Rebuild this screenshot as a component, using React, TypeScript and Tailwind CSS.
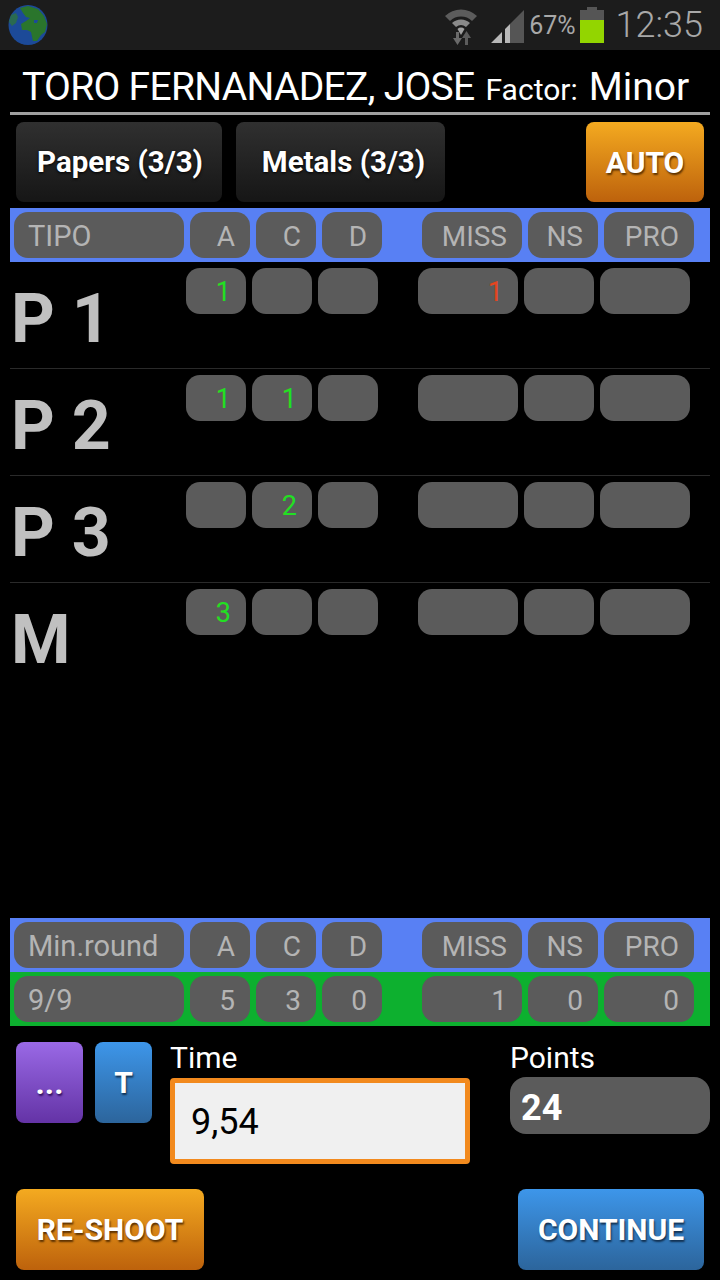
import React from "react";

const font = "font-['Roboto',sans-serif]";

function Pill({ w, children, align = "right", color = "text-[#b4b4b4]", size = "text-[27px]" }: { w: string; children?: React.ReactNode; align?: string; color?: string; size?: string }) {
  return (
    <div className={`${w} h-[46px] rounded-[14px] bg-[#5b5b5b] flex items-center pt-[3px] ${size} leading-none ${color} ${align === "left" ? "justify-start pl-[14px]" : "justify-end pr-[15px]"}`}>
      {children}
    </div>
  );
}

function SummaryStrip({ bg, values }: { bg: string; values: string[] }) {
  return (
    <div className={`mx-[10px] h-[54px] ${bg} flex items-center pl-[4px]`}>
      <Pill w="w-[170px] mr-[6px]" align="left" size="text-[29px]">{values[0]}</Pill>
      <div className="flex gap-[6px]">
        <Pill w="w-[60px]" size="text-[28px]">{values[1]}</Pill>
        <Pill w="w-[60px]" size="text-[28px]">{values[2]}</Pill>
        <Pill w="w-[60px]" size="text-[28px]">{values[3]}</Pill>
      </div>
      <div className="flex gap-[6px] ml-[40px]">
        <Pill w="w-[100px]" size="text-[28px]">{values[4]}</Pill>
        <Pill w="w-[70px]" size="text-[28px]">{values[5]}</Pill>
        <Pill w="w-[90px]" size="text-[28px]">{values[6]}</Pill>
      </div>
    </div>
  );
}

function TargetRow({ label, a, c, miss, last }: { label: string; a?: string; c?: string; miss?: string; last?: boolean }) {
  return (
    <div className={`h-[107px] mx-[10px] flex items-start ${last ? "" : "border-b border-[#2a2a2a]"}`}>
      <div className="w-[176px] mt-[17px] pl-[1px] text-[68px] leading-[80px] font-bold text-[#c0c0c0]">{label}</div>
      <div className="flex gap-[6px] mt-[6px]">
        <Pill w="w-[60px]" color="text-[#22e022]">{a}</Pill>
        <Pill w="w-[60px]" color="text-[#22e022]">{c}</Pill>
        <Pill w="w-[60px]" />
      </div>
      <div className="flex gap-[6px] ml-[40px] mt-[6px]">
        <Pill w="w-[100px]" color="text-[#e5451f]">{miss}</Pill>
        <Pill w="w-[70px]" />
        <Pill w="w-[90px]" />
      </div>
    </div>
  );
}

function Globe() {
  return (
    <svg viewBox="0 0 40 40" className="w-[40px] h-[40px] ml-[8px]">
      <ellipse cx="20" cy="20" rx="19.500" ry="20" fill="#1c4a98" />
      <path d="M12 3 L20 1 L30 4 L36 11 L39 19 L37 27 L33 30 L29 36 L25 36 L23 27 L19 25 L14 25 L13 19 L18 16 L22 13 L18 12 L15 8Z" fill="#2a752c" />
      <path d="M3 10 L8 8 L10 12 L8 18 L4 21 L1 17Z" fill="#2a6a50" />
      <path d="M26 15 L30 15 L29 18 L26 18Z" fill="#1c4a98" />
    </svg>
  );
}

function StatusIcons() {
  return (
    <div className="flex items-center">
      <svg viewBox="0 0 34 40" className="w-[34px] h-[40px]">
        <path d="M1 11 A23 23 0 0 1 33 11 L28 16 A16 16 0 0 0 6 16Z" fill="#5c5c5c" />
        <path d="M8 18 A13 13 0 0 1 26 18 L22 22 A8 8 0 0 0 12 22Z" fill="#8a8a8a" />
        <path d="M17 30 L13.500 24 A5 5 0 0 1 20.500 24Z" fill="#a0a0a0" />
        <path d="M12 27 h3 v6 h3 l-4.500 7 l-4.500 -7 h3Z" fill="#6a6a6a" />
        <path d="M21 40 h3 v-7 h3 l-4.500 -7 l-4.500 7 h3Z" fill="#5c5c5c" />
      </svg>
      <svg viewBox="0 0 33 33" className="w-[33px] h-[33px] ml-[13px] mt-[3px]">
        <path d="M33 0 V33 H19 V14Z" fill="#555" />
        <path d="M0 33 L11 22 V33Z M14 19 L19 14 V33 H14Z" fill="#b8b8b8" />
      </svg>
    </div>
  );
}

export default function App() {
  const darkBtn = "h-[80px] rounded-[8px] bg-linear-to-b from-[#303030] to-[#161616] flex items-center justify-center text-white font-bold text-[29.5px] [text-shadow:0_1px_3px_#000]";
  const orangeBtn = "rounded-[8px] bg-linear-to-b from-[#f4aa20] to-[#bd620c] flex items-center justify-center text-white font-bold text-[30px] [text-shadow:1px_2px_2px_#5a3000]";
  const blueBtn = "rounded-[8px] bg-linear-to-b from-[#3d96ea] to-[#2c659c] flex items-center justify-center text-white font-bold text-[30px] [text-shadow:1px_2px_2px_#123050]";

  return (
    <div className={`w-[720px] h-[1280px] bg-black overflow-hidden flex flex-col ${font}`}>
      {/* Status bar */}
      <div className="h-[50px] bg-[#1c1c1c] flex items-center justify-between shrink-0">
        <Globe />
        <div className="flex items-center pr-[17px]">
          <StatusIcons />
          <span className="text-[25px] text-[#a8a8a8] ml-[5px] leading-none">67%</span>
          <svg viewBox="0 0 24 36" className="w-[24px] h-[36px] ml-[4px]">
            <rect x="7" y="0" width="10" height="4" fill="#555" />
            <rect x="0" y="3" width="24" height="10" fill="#555" />
            <rect x="0" y="13" width="24" height="23" fill="#93d500" />
          </svg>
          <span className="text-[36px] text-[#a8a8a8] font-light ml-[12px] leading-none">12:35</span>
        </div>
      </div>

      {/* Title */}
      <div className="h-[65px] mx-[10px] border-b-[3px] border-[#a0a0a0] flex items-baseline pl-[12px] pt-[15px] text-white whitespace-nowrap shrink-0">
        <span className="text-[39px] leading-[44px] tracking-[-0.7px]">TORO FERNANADEZ, JOSE</span>
        <span className="text-[30px] leading-[44px] ml-[11px]">Factor:</span>
        <span className="text-[39px] leading-[44px] ml-[11px]">Minor</span>
      </div>

      {/* Target type buttons */}
      <div className="flex mt-[7px] px-[16px] shrink-0">
        <div className={`${darkBtn} w-[206px] pl-[2px]`}>Papers (3/3)</div>
        <div className={`${darkBtn} w-[209px] ml-[14px] pl-[6px]`}>Metals (3/3)</div>
        <div className={`${orangeBtn} w-[118px] h-[80px] ml-auto`}>AUTO</div>
      </div>

      <div className="mt-[6px] shrink-0">
        <SummaryStrip bg="bg-[#5880f4]" values={["TIPO", "A", "C", "D", "MISS", "NS", "PRO"]} />
      </div>

      <TargetRow label="P 1" a="1" miss="1" />
      <TargetRow label="P 2" a="1" c="1" />
      <TargetRow label="P 3" c="2" />
      <TargetRow label="M" a="3" last />

      <div className="flex-1" />

      <SummaryStrip bg="bg-[#5880f4]" values={["Min.round", "A", "C", "D", "MISS", "NS", "PRO"]} />
      <SummaryStrip bg="bg-[#0db02f]" values={["9/9", "5", "3", "0", "1", "0", "0"]} />

      {/* Time and points */}
      <div className="flex mt-[16px] pl-[16px] h-[122px] shrink-0">
        <div className="w-[67px] h-[81px] rounded-[8px] bg-linear-to-b from-[#9a69e6] to-[#6433a6] flex items-center justify-center text-white font-bold text-[32px] [text-shadow:1px_2px_2px_#301060]">...</div>
        <div className="w-[57px] h-[81px] ml-[12px] rounded-[8px] bg-linear-to-b from-[#3d96ea] to-[#2c659c] flex items-center justify-center text-white font-bold text-[30px] [text-shadow:1px_2px_2px_#123050]">T</div>
        <div className="ml-[18px] w-[300px]">
          <div className="text-[30px] leading-[32px] pb-[4px] text-white">Time</div>
          <div className="h-[86px] rounded-[4px] border-[5px] border-[#f28a1e] bg-[#f0f0f0] flex items-center pl-[16px] pt-[2px] text-[36px] text-black">9,54</div>
        </div>
        <div className="ml-[40px] w-[200px]">
          <div className="text-[30px] leading-[32px] pb-[3px] text-white">Points</div>
          <div className="h-[57px] rounded-[16px] bg-[#5b5b5b] flex items-center pl-[11px] pt-[4px] text-[36px] font-bold text-white">24</div>
        </div>
      </div>

      {/* Actions */}
      <div className="flex justify-between px-[16px] mt-[25px] mb-[10px] shrink-0">
        <div className={`${orangeBtn} w-[188px] h-[81px]`}>RE-SHOOT</div>
        <div className={`${blueBtn} w-[186px] h-[81px]`}>CONTINUE</div>
      </div>
    </div>
  );
}
